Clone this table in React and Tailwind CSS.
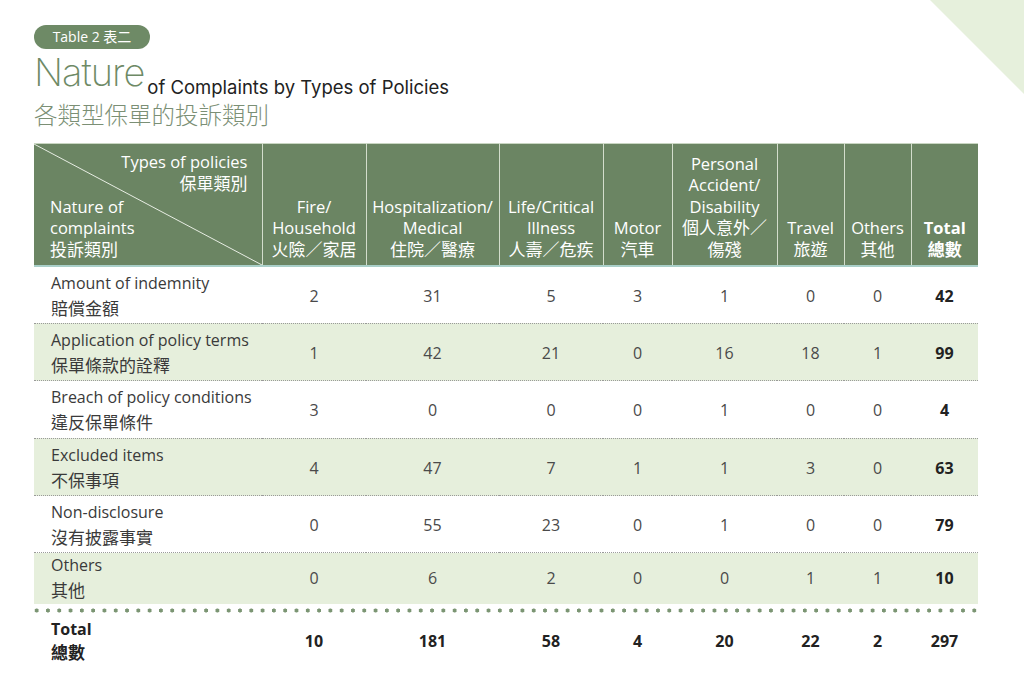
const cols = [
  { w: 104, en: ['Fire/', 'Household'], zh: ['火險／家居'] },
  { w: 133, en: ['Hospitalization/', 'Medical'], zh: ['住院／醫療'] },
  { w: 104, en: ['Life/Critical', 'Illness'], zh: ['人壽／危疾'] },
  { w: 69, en: ['Motor'], zh: ['汽車'] },
  { w: 105, en: ['Personal', 'Accident/', 'Disability'], zh: ['個人意外／', '傷殘'] },
  { w: 67, en: ['Travel'], zh: ['旅遊'] },
  { w: 67, en: ['Others'], zh: ['其他'] },
]

const rows = [
  ['Amount of indemnity', '賠償金額', [2, 31, 5, 3, 1, 0, 0], 42],
  ['Application of policy terms', '保單條款的詮釋', [1, 42, 21, 0, 16, 18, 1], 99],
  ['Breach of policy conditions', '違反保單條件', [3, 0, 0, 0, 1, 0, 0], 4],
  ['Excluded items', '不保事項', [4, 47, 7, 1, 1, 3, 0], 63],
  ['Non-disclosure', '沒有披露事實', [0, 55, 23, 0, 1, 0, 0], 79],
  ['Others', '其他', [0, 6, 2, 0, 0, 1, 1], 10],
]

const totals = [10, 181, 58, 4, 20, 22, 2]

const font = { fontFamily: '"Open Sans", "Noto Sans CJK TC", sans-serif' }

// 中文字比英文大一點
function Zh({ children }) {
  return <span className="text-[17px]">{children}</span>
}

export default function App() {
  return (
    <div className="relative w-[1024px] h-[679px] overflow-hidden bg-white text-[#3a3a3a]" style={font}>
      {/* corner triangle */}
      <svg className="absolute top-0 right-0" width="94" height="94" viewBox="0 0 94 94">
        <polygon points="0,0 94,0 94,94" fill="#e6f0dc" />
      </svg>

      <div className="pl-[34px] pt-[24px]">
        <div className="inline-flex h-[24px] w-[116px] items-center justify-center rounded-full bg-[#6e8a66] text-[14px] text-white">
          Table 2 表二
        </div>

        <div className="flex items-end mt-[4px]">
          <span className="font-[Inter,sans-serif] text-[38px] font-extralight leading-none tracking-[-1px] text-[#6e8a66]">
            Nature
          </span>
          <span className="font-[Inter,sans-serif] text-[18.5px] font-normal leading-none text-[#222] mb-[-6px] ml-[3px]">
            of Complaints by Types of Policies
          </span>
        </div>

        <div className="mt-[12px] text-[23.5px] leading-none text-[#7b8f75]" style={{ fontFamily: '"Noto Sans CJK TC", sans-serif', fontWeight: 300 }}>
          各類型保單的投訴類別
        </div>

        <table className="mt-[17px] w-[944px] table-fixed border-collapse">
          <colgroup>
            <col className="w-[228px]" />
            {cols.map((c, i) => (
              <col key={i} style={{ width: c.w }} />
            ))}
            <col className="w-[67px]" />
          </colgroup>
          <thead>
            <tr className="h-[122px] bg-[#6b8563] text-white text-[16.5px] leading-[21.5px] border-t border-t-[#c9d6c2] border-b-2 border-b-[#a9cfc9]">
              <th className="relative p-0 font-normal">
                <svg className="absolute inset-0" width="228" height="121" viewBox="0 0 228 121" preserveAspectRatio="none">
                  <line x1="0" y1="0" x2="228" y2="121" stroke="#e7ede3" strokeWidth="1" />
                </svg>
                <div className="flex h-[121px] flex-col justify-between pt-[7px] pb-[5px]">
                  <div className="pr-[14px] text-right">
                    <div>Types of policies</div>
                    <div><Zh>保單類別</Zh></div>
                  </div>
                  <div className="pl-[16px] text-left">
                    <div>Nature of</div>
                    <div>complaints</div>
                    <div><Zh>投訴類別</Zh></div>
                  </div>
                </div>
              </th>
              {cols.map((c, i) => (
                <th key={i} className="border-l border-l-[#d3ddcc] px-0 pb-[5px] align-bottom font-normal">
                  {c.en.map(t => <div key={t}>{t}</div>)}
                  {c.zh.map(t => <div key={t}><Zh>{t}</Zh></div>)}
                </th>
              ))}
              <th className="border-l border-l-[#d3ddcc] px-0 pb-[5px] align-bottom font-bold">
                <div>Total</div>
                <div><Zh>總數</Zh></div>
              </th>
            </tr>
          </thead>
          <tbody className="text-[16px] leading-[25px]">
            {rows.map(([en, zh, vals, total], i) => {
              const last = i === rows.length - 1
              const pad = last ? 'pt-0' : 'pt-[3px]'
              return (
                <tr
                  key={en}
                  className={
                    (last ? 'h-[50px] ' : 'h-[57.4px] border-b border-dotted border-b-[#9a9a9a] ') +
                    (i % 2 === 1 ? 'bg-[#e6efdc]' : 'bg-white')
                  }
                >
                  <td className={'pl-[17px] align-middle ' + pad}>
                    <div>{en}</div>
                    <div><Zh>{zh}</Zh></div>
                  </td>
                  {vals.map((v, j) => (
                    <td key={j} className={'text-center align-middle text-[#4a4a4a] ' + pad}>{v}</td>
                  ))}
                  <td className={'text-center align-middle font-bold text-[#222] ' + pad}>{total}</td>
                </tr>
              )
            })}
            <tr className="h-[13px]">
              <td colSpan={9} className="h-[13px] p-0 bg-[radial-gradient(circle,#7b9573_1.8px,transparent_2.3px)] bg-[length:11.3px_13px] bg-repeat-x bg-[position:-3px_0]" />
            </tr>
            <tr className="h-[48px] font-bold leading-[24px] text-[#222]">
              <td className="pl-[17px] align-middle">
                <div>Total</div>
                <div><Zh>總數</Zh></div>
              </td>
              {totals.map((v, j) => (
                <td key={j} className="text-center align-middle">{v}</td>
              ))}
              <td className="text-center align-middle">297</td>
            </tr>
          </tbody>
        </table>
      </div>
    </div>
  )
}
